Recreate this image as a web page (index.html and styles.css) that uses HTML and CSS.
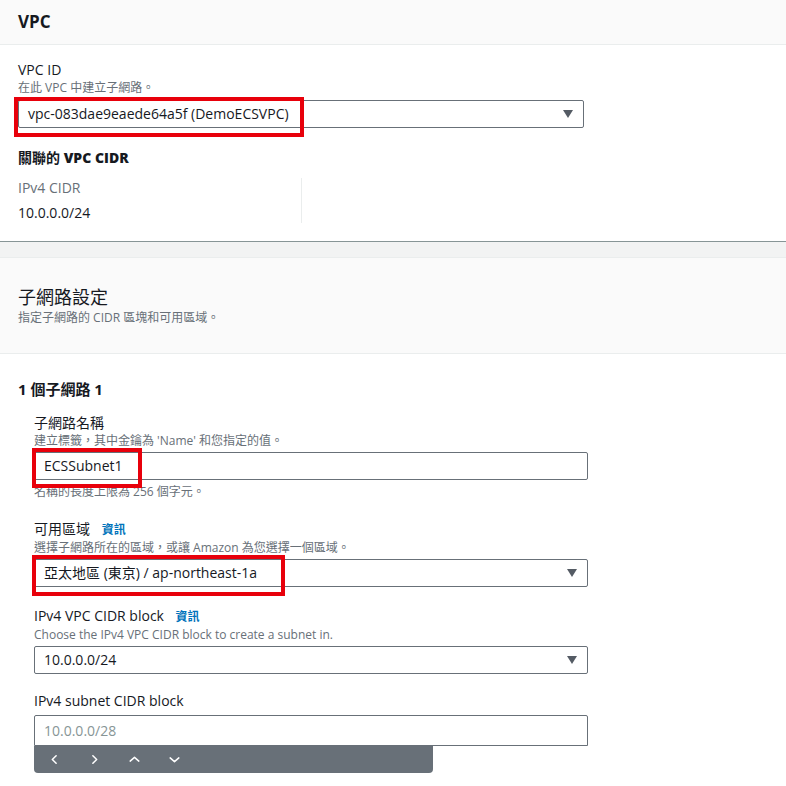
FILE: index.html
```html
<!DOCTYPE html>
<html lang="zh-Hant">
<head>
<meta charset="utf-8">
<title>VPC subnet</title>
<link rel="stylesheet" href="styles.css">
</head>
<body>
<section class="panel panel-vpc">
  <header class="panel-head small">
    <h2>VPC</h2>
  </header>
  <div class="panel-body">
    <div class="field">
      <div class="label">VPC ID</div>
      <div class="desc">在此 VPC 中建立子網路。</div>
      <div class="control select wide">
        <span>vpc-083dae9eaede64a5f (DemoECSVPC)</span>
        <span class="caret"></span>
        <div class="mark mark-vpc"></div>
      </div>
    </div>
    <div class="cidr-title">關聯的 <b>VPC CIDR</b></div>
    <div class="kv-grid">
      <div class="kv">
        <div class="kv-key">IPv4 CIDR</div>
        <div class="kv-val">10.0.0.0/24</div>
      </div>
      <div class="kv"></div>
    </div>
  </div>
</section>

<section class="panel panel-subnet">
  <header class="panel-head big">
    <h2>子網路設定</h2>
    <div class="desc">指定子網路的 CIDR 區塊和可用區域。</div>
  </header>
  <div class="panel-body">
    <h3 class="subnet-title">1 個子網路 1</h3>
    <div class="subnet-fields">
      <div class="field">
        <div class="label">子網路名稱</div>
        <div class="desc">建立標籤，其中金鑰為 'Name' 和您指定的值。</div>
        <div class="control input">
          <span>ECSSubnet1</span>
          <div class="mark mark-name"></div>
        </div>
        <div class="constraint">名稱的長度上限為 256 個字元。</div>
      </div>
      <div class="field">
        <div class="label">可用區域 <a class="info">資訊</a></div>
        <div class="desc">選擇子網路所在的區域，或讓 Amazon 為您選擇一個區域。</div>
        <div class="control select">
          <span>亞太地區 (東京) / ap-northeast-1a</span>
          <span class="caret"></span>
          <div class="mark mark-az"></div>
        </div>
      </div>
      <div class="field">
        <div class="label">IPv4 VPC CIDR block <a class="info">資訊</a></div>
        <div class="desc">Choose the IPv4 VPC CIDR block to create a subnet in.</div>
        <div class="control select">
          <span>10.0.0.0/24</span>
          <span class="caret"></span>
        </div>
      </div>
      <div class="field field-last">
        <div class="label">IPv4 subnet CIDR block</div>
        <div class="control input tall">
          <span class="placeholder">10.0.0.0/28</span>
        </div>
        <div class="stepper">
          <svg viewBox="0 0 12 12" class="ico"><path d="M7.5 2.5 4 6l3.5 3.5"/></svg>
          <svg viewBox="0 0 12 12" class="ico"><path d="M4.5 2.5 8 6 4.5 9.5"/></svg>
          <svg viewBox="0 0 12 12" class="ico"><path d="M2 7.5 6 4l4 3.5"/></svg>
          <svg viewBox="0 0 12 12" class="ico"><path d="M2 4.5 6 8l4-3.5"/></svg>
        </div>
      </div>
    </div>
  </div>
</section>
</body>
</html>
```

FILE: styles.css
```css
* { box-sizing: border-box; }

body {
  margin: 0;
  background: #f2f3f3;
  font-family: "Open Sans", "Noto Sans CJK TC", sans-serif;
  font-size: 14px;
  line-height: 20px;
  color: #16191f;
}

.panel {
  background: #ffffff;
}

.panel-vpc {
  border-bottom: 1px solid #879596;
  margin-bottom: 15px;
}

.panel-subnet {
  border-top: 1px solid #eaeded;
  min-height: 560px;
}

.panel-head {
  background: #fafafa;
  border-bottom: 1px solid #eaeded;
  padding: 0 18px;
}

.panel-head.small {
  height: 45px;
  display: flex;
  align-items: center;
}

.panel-head h2 {
  margin: 0;
  font-size: 17px;
  font-weight: 700;
  line-height: 24px;
}

.panel-head.big {
  height: 96px;
  padding-top: 26px;
}

.panel-head.big h2 {
  font-size: 18px;
  font-weight: 400;
  line-height: 26px;
}

.panel-vpc .panel-body {
  padding: 15px 18px 18px;
}

.label {
  line-height: 20px;
}

.desc, .constraint {
  font-size: 12px;
  line-height: 16px;
  color: #687078;
}

.info {
  color: #0073bb;
  font-weight: 700;
  font-size: 12px;
  margin-left: 8px;
}

.control {
  position: relative;
  margin-top: 4px;
  height: 28px;
  width: 554px;
  border: 1px solid #687078;
  border-radius: 2px;
  background: #fff;
  display: flex;
  align-items: center;
  justify-content: space-between;
  padding: 0 10px 0 9px;
  white-space: nowrap;
}

.control.wide {
  width: 566px;
}

.control.tall {
  height: 31px;
  border-radius: 2px 2px 0 0;
}

.placeholder {
  color: #879596;
}

.caret {
  width: 0;
  height: 0;
  border-left: 5px solid transparent;
  border-right: 5px solid transparent;
  border-top: 8px solid #545b64;
}

.mark {
  position: absolute;
  border: 4px solid #e8000b;
  pointer-events: none;
}

.mark-vpc {
  left: -5px;
  top: -4px;
  width: 290px;
  height: 40px;
}

.mark-name {
  left: -3px;
  top: -5px;
  width: 110px;
  height: 40px;
}

.mark-az {
  left: -3px;
  top: -5px;
  width: 253px;
  height: 41px;
}

.cidr-title {
  margin-top: 20px;
  font-weight: 700;
}

.kv-grid {
  display: grid;
  grid-template-columns: 284px 284px;
  margin-top: 10px;
}

.kv {
  border-right: 1px solid #eaeded;
}

.kv:last-child {
  border-right: 0;
}

.kv-key {
  color: #687078;
}

.kv-val {
  margin-top: 5px;
}

.panel-subnet .panel-body {
  padding: 25px 18px 30px;
}

.subnet-title {
  margin: 0;
  font-size: 15px;
  font-weight: 700;
  line-height: 20px;
}

.subnet-fields {
  padding-left: 16px;
  margin-top: 14px;
  display: flex;
  flex-direction: column;
  gap: 19px;
}

.subnet-fields .control {
  margin-top: 3px;
}

.field-last {
  margin-top: -2px;
}

.field-last .control {
  margin-top: 4px;
}

.constraint {
  margin-top: 4px;
}

.stepper {
  width: 399px;
  height: 27px;
  background: #687078;
  border-radius: 0 0 4px 4px;
  display: flex;
  align-items: center;
  gap: 27px;
  padding-left: 14px;
}

.ico {
  width: 13px;
  height: 13px;
  fill: none;
  stroke: #ffffff;
  stroke-width: 1.4;
  stroke-linecap: round;
  stroke-linejoin: round;
}
```
